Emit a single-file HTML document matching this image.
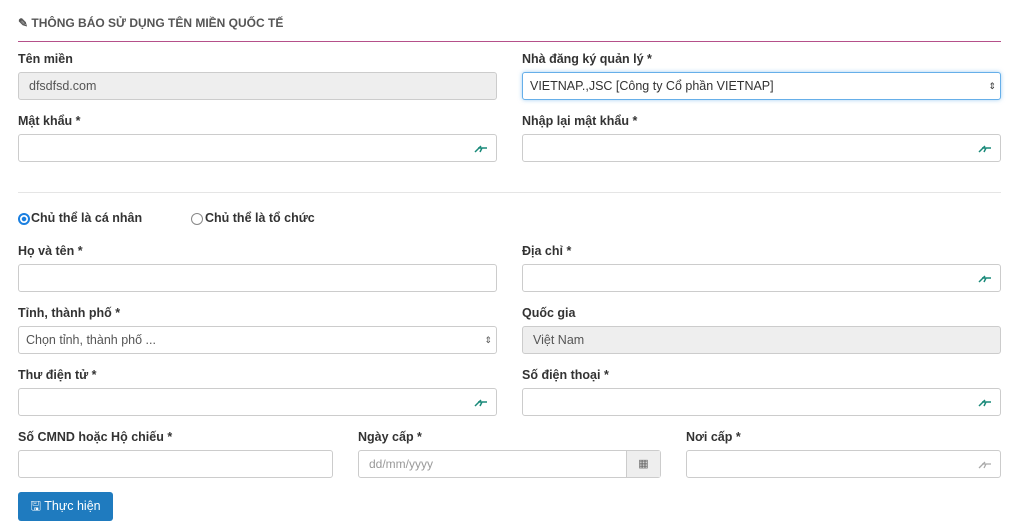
<!DOCTYPE html><html><head><meta charset="utf-8"><style>
body{margin:0;width:1024px;height:528px;background:#fff;font-family:"Liberation Sans",sans-serif;color:#333;position:relative;overflow:hidden}
.a{position:absolute}
.t{font-size:12px;font-weight:bold;color:#555}
.l{font-size:12.5px;font-weight:bold;color:#333}
.i{position:absolute;height:28px;border:1px solid #ccc;border-radius:3px;box-sizing:border-box;background:#fff;font-size:12.5px;color:#555;line-height:26px;padding-left:10px}
.d{background:#eee}
.k{position:absolute;right:8px;top:8px;width:14px;height:10px}
</style></head><body>
<div class="a t" style="left:18px;top:16px">&#9998; THÔNG BÁO SỬ DỤNG TÊN MIỀN QUỐC TẾ</div>
<div class="a" style="left:18px;top:41px;width:983px;height:1px;background:#b5508a"></div>
<div class="a l" style="left:18px;top:52px">Tên miền</div>
<div class="i d" style="left:18px;top:72px;width:479px">dfsdfsd.com</div>
<div class="a l" style="left:522px;top:52px">Nhà đăng ký quản lý *</div>
<div class="i" style="left:522px;top:72px;width:479px;border-color:#66afe9;box-shadow:0 0 4px rgba(102,175,233,.6);color:#333;padding-left:7px">VIETNAP.,JSC [Công ty Cổ phần VIETNAP]<span class="a" style="right:4px;top:0;font-size:9px">&#8661;</span></div>
<div class="a l" style="left:18px;top:114px">Mật khẩu *</div>
<div class="i" style="left:18px;top:134px;width:479px"><svg class="k" viewBox="0 0 14 10"><path d="M1 9L7 3M4 5h9M8 5l-2 4" stroke="#1a8a7a" stroke-width="1.5" fill="none"/></svg></div>
<div class="a l" style="left:522px;top:114px">Nhập lại mật khẩu *</div>
<div class="i" style="left:522px;top:134px;width:479px"><svg class="k" viewBox="0 0 14 10"><path d="M1 9L7 3M4 5h9M8 5l-2 4" stroke="#1a8a7a" stroke-width="1.5" fill="none"/></svg></div>
<div class="a" style="left:18px;top:192px;width:983px;height:1px;background:#e5e5e5"></div>
<div class="a" style="left:18px;top:213px;width:8px;height:8px;border-radius:50%;border:2px solid #1a7fe0;background:radial-gradient(#1a7fe0 35%,#fff 45%)"></div>
<div class="a l" style="left:31px;top:211px">Chủ thể là cá nhân</div>
<div class="a" style="left:191px;top:213px;width:10px;height:10px;border-radius:50%;border:1px solid #888"></div>
<div class="a l" style="left:205px;top:211px">Chủ thể là tổ chức</div>
<div class="a l" style="left:18px;top:244px">Họ và tên *</div>
<div class="i" style="left:18px;top:264px;width:479px"></div>
<div class="a l" style="left:522px;top:244px">Địa chỉ *</div>
<div class="i" style="left:522px;top:264px;width:479px"><svg class="k" viewBox="0 0 14 10"><path d="M1 9L7 3M4 5h9M8 5l-2 4" stroke="#1a8a7a" stroke-width="1.5" fill="none"/></svg></div>
<div class="a l" style="left:18px;top:306px">Tỉnh, thành phố *</div>
<div class="i" style="left:18px;top:326px;width:479px;padding-left:7px">Chọn tỉnh, thành phố ...<span class="a" style="right:4px;top:0;font-size:9px">&#8661;</span></div>
<div class="a l" style="left:522px;top:306px">Quốc gia</div>
<div class="i d" style="left:522px;top:326px;width:479px">Việt Nam</div>
<div class="a l" style="left:18px;top:368px">Thư điện tử *</div>
<div class="i" style="left:18px;top:388px;width:479px"><svg class="k" viewBox="0 0 14 10"><path d="M1 9L7 3M4 5h9M8 5l-2 4" stroke="#1a8a7a" stroke-width="1.5" fill="none"/></svg></div>
<div class="a l" style="left:522px;top:368px">Số điện thoại *</div>
<div class="i" style="left:522px;top:388px;width:479px"><svg class="k" viewBox="0 0 14 10"><path d="M1 9L7 3M4 5h9M8 5l-2 4" stroke="#1a8a7a" stroke-width="1.5" fill="none"/></svg></div>
<div class="a l" style="left:18px;top:430px">Số CMND hoặc Hộ chiếu *</div>
<div class="i" style="left:18px;top:450px;width:315px"></div>
<div class="a l" style="left:358px;top:430px">Ngày cấp *</div>
<div class="i" style="left:358px;top:450px;width:303px;color:#999;font-size:12px">dd/mm/yyyy<div class="a" style="right:0;top:0;width:33px;height:26px;background:#eee;border-left:1px solid #ccc;text-align:center;color:#666;font-size:11px">&#9638;</div></div>
<div class="a l" style="left:686px;top:430px">Nơi cấp *</div>
<div class="i" style="left:686px;top:450px;width:315px"><svg class="k" viewBox="0 0 14 10"><path d="M1 9L7 3M4 5h9M8 5l-2 4" stroke="#aaa" stroke-width="1.3" fill="none"/></svg></div>
<div class="a" style="left:18px;top:492px;width:95px;height:29px;background:#1f7bbf;border-radius:3px;color:#fff;font-size:12.5px;line-height:29px;text-align:center">&#128427; Thực hiện</div>
</body></html>
